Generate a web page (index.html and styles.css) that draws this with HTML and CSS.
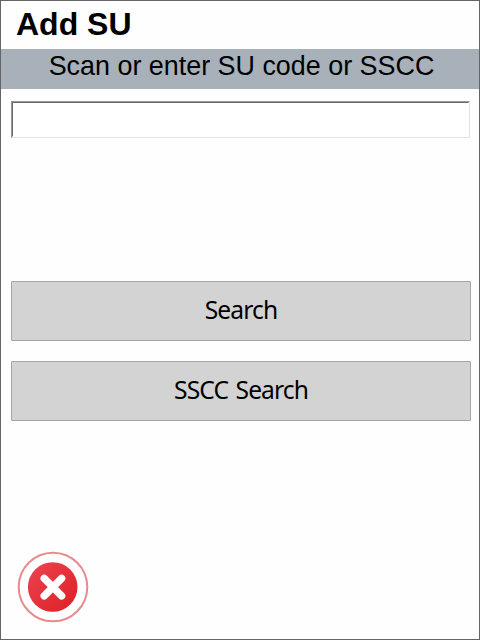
FILE: index.html
```html
<!DOCTYPE html>
<html lang="en">
<head>
<meta charset="utf-8">
<title>Add SU</title>
<link rel="stylesheet" href="styles.css">
</head>
<body>
<main class="screen">
  <h1 class="title">Add SU</h1>
  <p class="prompt">Scan or enter SU code or SSCC</p>
  <div class="field"><input class="code-input" type="text"></div>
  <div class="actions">
    <button class="action" type="button"><span class="label">Search</span></button>
    <button class="action" type="button"><span class="label">SSCC Search</span></button>
  </div>
  <button class="cancel" type="button">
    <svg width="72" height="72" viewBox="0 0 72 72">
      <defs>
        <linearGradient id="red" x1="0" y1="0" x2="1" y2="1">
          <stop offset="0" stop-color="#ec4450"/>
          <stop offset="1" stop-color="#dd1f25"/>
        </linearGradient>
      </defs>
      <circle cx="36" cy="36" r="34.3" fill="#fff" stroke="#e78b8e" stroke-width="2"/>
      <circle cx="35.7" cy="36" r="24.8" fill="url(#red)"/>
      <path d="M27.2 27.4 44.6 44.8M44.6 27.4 27.2 44.8" fill="none" stroke="#fff" stroke-width="7.4" stroke-linecap="round"/>
    </svg>
  </button>
</main>
</body>
</html>
```
FILE: styles.css
```css
* { box-sizing: border-box; }
body { margin: 0; background: #fff; color: #000; }
.screen {
  display: flex;
  flex-direction: column;
  width: 480px;
  height: 640px;
  border: 1px solid #646464;
  background: #fefefe;
  font-family: "Liberation Sans", Arial, sans-serif;
}
.title {
  height: 48px;
  margin: 0;
  padding-left: 15px;
  font-size: 32px;
  line-height: 46px;
}
.prompt {
  height: 40px;
  margin: 0;
  padding-left: 3px;
  background: #a8b1b9;
  font-size: 26.9px;
  line-height: 34px;
  text-align: center;
  white-space: nowrap;
}
.field {
  height: 37px;
  margin: 12px 9px 0 10px;
  border: 1px solid;
  border-color: #989898 #e3e3e3 #e3e3e3 #989898;
}
.code-input {
  display: block;
  width: 100%;
  height: 100%;
  padding: 0 4px;
  border: 1px solid;
  border-color: #696969 #fff #fff #696969;
  outline: 0;
  background: #fff;
  font: inherit;
  font-size: 24px;
}
.actions {
  display: flex;
  flex-direction: column;
  gap: 20px;
  margin: 143px 8px 0 10px;
}
.action {
  height: 60px;
  padding: 0 0 2px;
  border: 1px solid #a5a5a5;
  border-radius: 1px;
  background: #d3d3d3;
  color: #000;
  font-family: "Noto Sans", Tahoma, sans-serif;
  font-size: 24.6px;
  line-height: 56px;
}
.label { letter-spacing: -0.9px; word-spacing: 2px; }
.cancel {
  width: 72px;
  height: 72px;
  margin: auto 0 16px 16px;
  padding: 0;
  border: 0;
  background: none;
}
.cancel svg { display: block; }
```
